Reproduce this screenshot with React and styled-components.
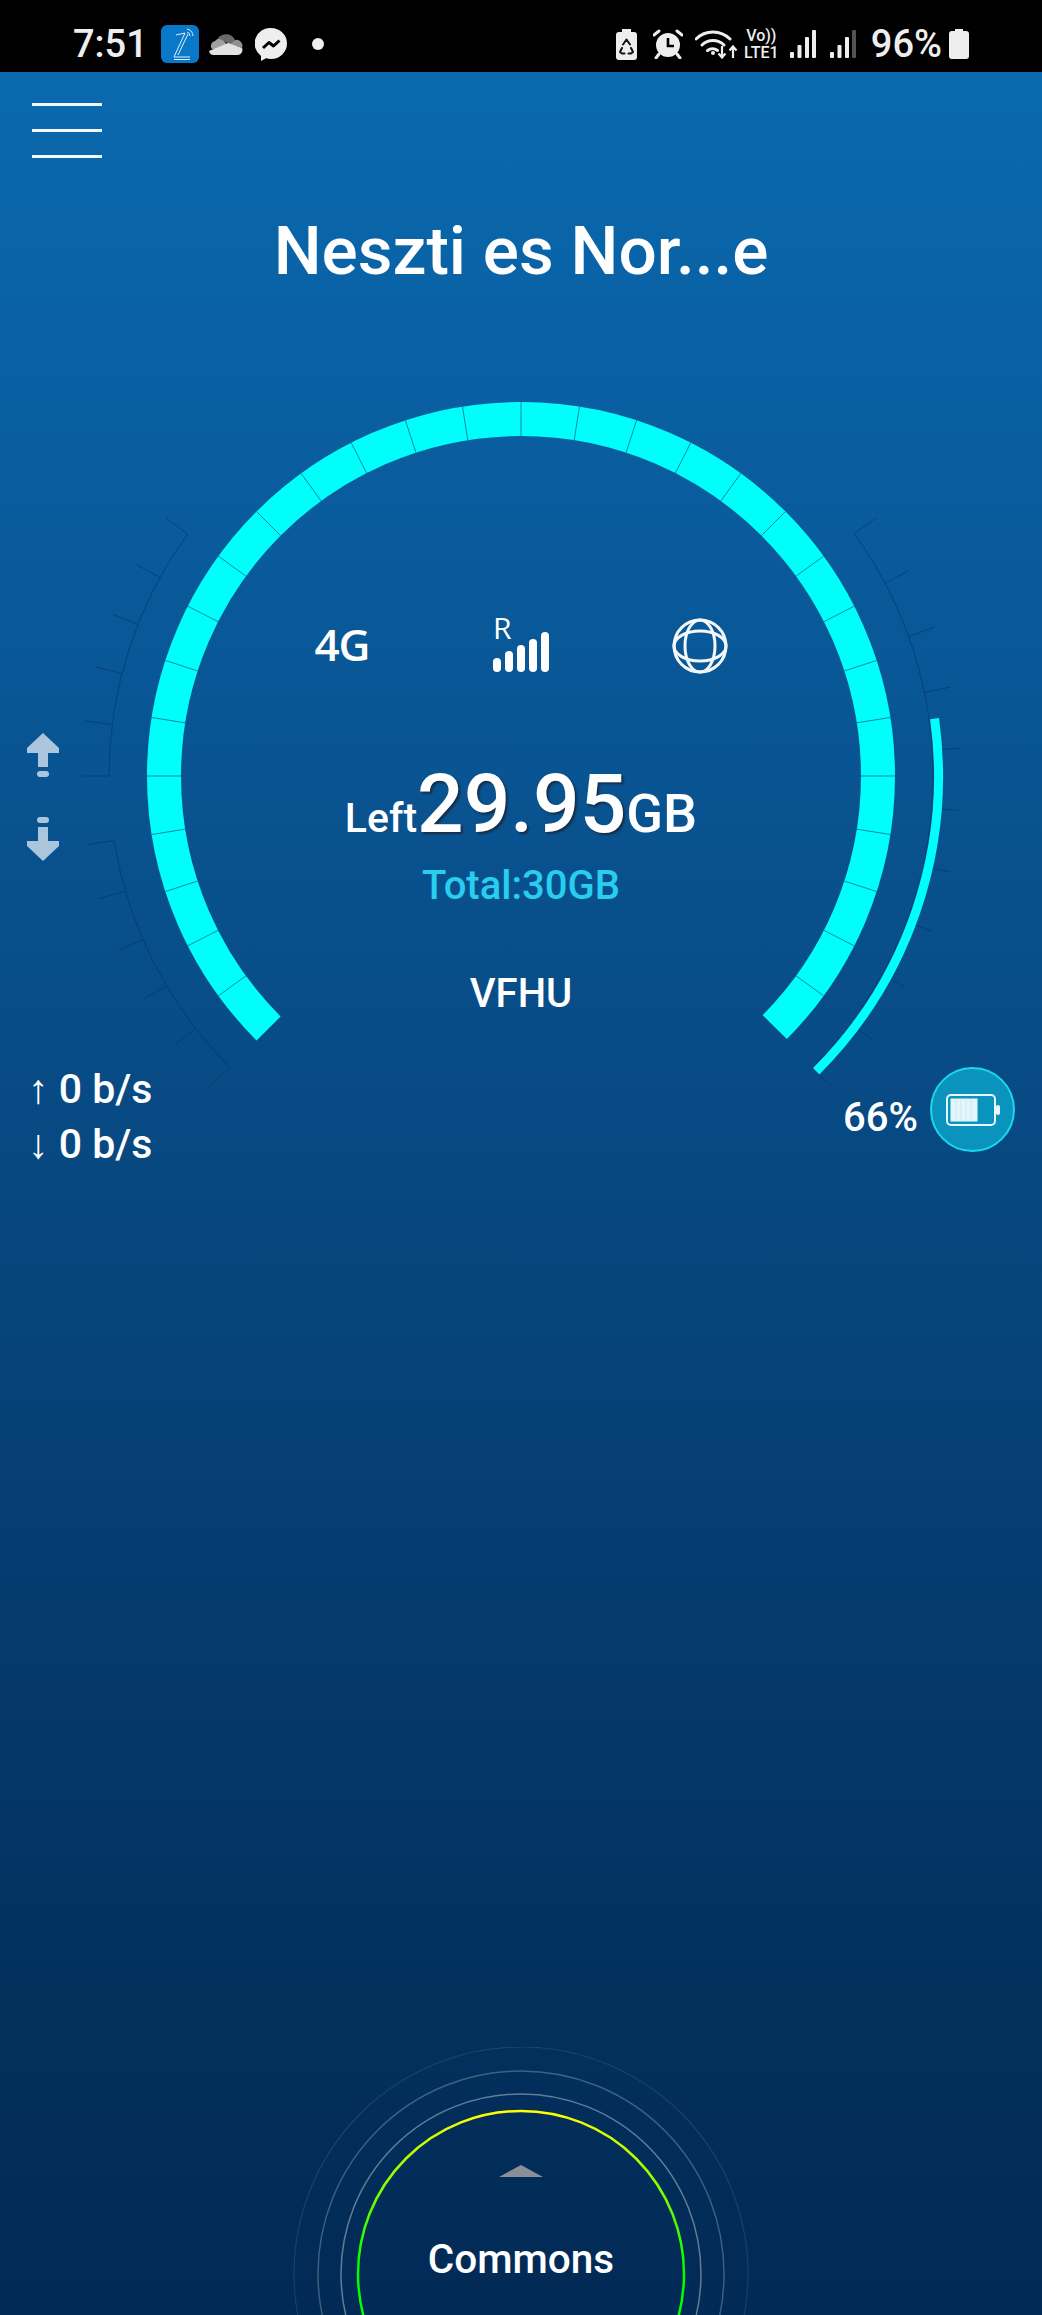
import styled, { createGlobalStyle } from "styled-components";

const GlobalStyle = createGlobalStyle`
  html, body {
    margin: 0;
    padding: 0;
    background: #022a56;
  }
  * {
    box-sizing: border-box;
  }
`;

// gauge centre inside the svg box
const CX = 521;
const CY = 437;

const pt = (r, a) => {
  const rad = (a * Math.PI) / 180;
  return [CX + r * Math.cos(rad), CY - r * Math.sin(rad)];
};

const arc = (r, from, to) => {
  const [x1, y1] = pt(r, from);
  const [x2, y2] = pt(r, to);
  const sweep = to < from ? 1 : 0;
  const large = Math.abs(from - to) > 180 ? 1 : 0;
  return `M${x1} ${y1}A${r} ${r} 0 ${large} ${sweep} ${x2} ${y2}`;
};

const steps = (from, step, count) =>
  Array.from({ length: count + 1 }, (_, i) => from + step * i);

const Radial = ({ a, r1, r2, ...rest }) => {
  const [x1, y1] = pt(r1, a);
  const [x2, y2] = pt(r2, a);
  return <line x1={x1} y1={y1} x2={x2} y2={y2} {...rest} />;
};

const GaugeArt = () => (
  <GaugeSvg viewBox="0 0 1042 820">
    <path d={arc(357, 225, -44.7)} fill="none" stroke="#00fffb" strokeWidth="34" />
    {steps(225, -9, 30)
      .slice(1, 30)
      .map((a) => (
        <Radial key={a} a={a} r1={340} r2={374} stroke="#0a86ad" strokeWidth="1" />
      ))}

    <g fill="none" stroke="#04305f" strokeOpacity="0.55" strokeWidth="1">
      <path d={arc(412, 180, 144)} />
      <path d={arc(412, 189, 225)} />
      <path d={arc(412, 36, -45)} />
      {steps(180, -7.2, 5).map((a) => (
        <Radial key={a} a={a} r1={412} r2={439} />
      ))}
      {steps(189, 7.2, 5).map((a) => (
        <Radial key={a} a={a} r1={412} r2={439} />
      ))}
      {steps(36, -8.1, 10).map((a) => (
        <Radial key={a} a={a} r1={412} r2={439} />
      ))}
    </g>

    <path d={arc(417.5, 7.9, -45)} fill="none" stroke="#00fffb" strokeWidth="9" />
  </GaugeSvg>
);

const TransferArrow = ({ down }) => (
  <ArrowIcon viewBox="0 0 32 44" $down={down}>
    <path d="M16 0 32 15v5H21v14H11V20H0v-5z" fill="#abc5dc" />
    <rect x="10" y="38" width="12" height="6" rx="3" fill="#abc5dc" />
  </ArrowIcon>
);

const SignalBars = ({ dim }) => (
  <StatusIcon viewBox="0 0 26 28" width="26" height="28" $ml={dim ? 14 : 10}>
    <rect x="0" y="22" width="4" height="6" rx="1" fill="#eee" />
    <rect x="7.5" y="15" width="4" height="13" rx="1" fill="#eee" />
    <rect x="15" y="7" width="4" height="21" rx="1" fill="#eee" />
    <rect x="22" y="0" width="4" height="28" rx="1" fill="#eee" opacity={dim ? 0.35 : 1} />
  </StatusIcon>
);

const strengthBars = [14, 21, 27, 33, 40];

export default function App() {
  return (
    <Page>
      <GlobalStyle />
      <StatusBar>
        <StatusGroup>
          <Clock>7:51</Clock>
          <StatusIcon viewBox="0 0 38 38" width="38" height="38" $ml={13}>
            <rect width="38" height="38" rx="6" fill="#0a78c8" />
            <g fill="none" stroke="#dff1ff" strokeWidth="1">
              <path d="M15 10l9-2L13 32h16" />
              <path d="M27 9 17 30M13 34.500h16" />
              <path d="M26 4a7 7 0 0 1 6 7M26 7a4 4 0 0 1 3 4" />
            </g>
          </StatusIcon>
          <StatusIcon viewBox="0 0 35 22" width="35" height="22" $ml={9}>
            <path d="M7 8a8 8 0 0 1 7-3l5 7-6 4H4a5 5 0 0 1 3-8z" fill="#a0a0a0" />
            <path d="M10 5a10 10 0 0 1 17 2l-6 4-5-3z" fill="#6a6a6a" />
            <path d="M27 7a6 6 0 0 1 7 8l-13-4z" fill="#8f8f8f" />
            <path d="M13 13l7-3 14 5a5 5 0 0 1-4 7H6a5 5 0 0 1-5-4z" fill="#e2e2e2" />
          </StatusIcon>
          <StatusIcon viewBox="0 0 32 33" width="32" height="33" $ml={12}>
            <path d="M16 0a16 15.500 0 0 1 0 31 18 18 0 0 1-5-.7L6 33v-5A15.500 15.500 0 0 1 16 0z" fill="#eee" />
            <path d="M8 20l6-5.500 4.500 3.500 6-5.500" fill="none" stroke="#000" strokeWidth="3" strokeLinejoin="round" />
          </StatusIcon>
          <Dot />
        </StatusGroup>

        <StatusGroup>
          <StatusIcon viewBox="0 0 21 31" width="21" height="31">
            <path d="M6 0h9v3h3a3 3 0 0 1 3 3v22a3 3 0 0 1-3 3H3a3 3 0 0 1-3-3V6a3 3 0 0 1 3-3h3z" fill="#eee" />
            <path d="M7 15.500l3.500-5 3.500 5M6 19l-2 4 2 1.500h2.500M15 19l2 4-2 1.500h-2.500" fill="none" stroke="#111" strokeWidth="2" strokeLinecap="round" strokeLinejoin="round" />
          </StatusIcon>
          <StatusIcon viewBox="0 0 30 30" width="30" height="30" $ml={16}>
            <circle cx="15" cy="16" r="12" fill="#eee" />
            <path d="M15 9v8h6" fill="none" stroke="#000" strokeWidth="2.600" />
            <path d="M1 6l5-4M29 6l-5-4M6 25l-3 4M24 25l3 4" stroke="#eee" strokeWidth="3" strokeLinecap="round" />
          </StatusIcon>
          <StatusIcon viewBox="0 0 43 30" width="43" height="30" $ml={12}>
            <g fill="none" stroke="#eee" strokeWidth="3" strokeLinecap="round">
              <path d="M1 10a24 24 0 0 1 34 0" />
              <path d="M7 16a16 16 0 0 1 22 0" />
              <path d="M12.500 21.500a8 8 0 0 1 10 0" />
            </g>
            <circle cx="18" cy="24" r="2" fill="#eee" />
            <path d="M27 17v11M23.500 24.500l3.500 4 3.500-4M38 29V18M34.500 21.500l3.500-4 3.500 4" fill="none" stroke="#eee" strokeWidth="2.200" />
          </StatusIcon>
          <Network>
            <span>Vo))</span>
            <span>LTE1</span>
          </Network>
          <SignalBars />
          <SignalBars dim />
          <BatteryText>96%</BatteryText>
          <StatusIcon viewBox="0 0 20 30" width="20" height="30" $ml={7}>
            <path d="M6 0h8v2h3a3 3 0 0 1 3 3v22a3 3 0 0 1-3 3H3a3 3 0 0 1-3-3V5a3 3 0 0 1 3-3h3z" fill="#eee" />
          </StatusIcon>
        </StatusGroup>
      </StatusBar>

      <Menu>
        <MenuLine />
        <MenuLine />
        <MenuLine />
      </Menu>

      <Title>Neszti es Nor...e</Title>

      <Gauge>
        <GaugeArt />
        <GaugeGrid>
          <Arrows>
            <TransferArrow />
            <TransferArrow down />
          </Arrows>

          <Readout>
            <IconRow>
              <NetType>4G</NetType>
              <Strength>
                <RoamLetter>R</RoamLetter>
                <svg viewBox="0 0 56 40" width="56" height="40">
                  {strengthBars.map((h, i) => (
                    <rect key={h} x={i * 12} y={40 - h} width="8" height={h} rx="4" fill="#fff" />
                  ))}
                </svg>
              </Strength>
              <svg viewBox="0 0 58 58" width="58" height="58">
                <g fill="none" stroke="#f4f8fb" strokeWidth="3">
                  <circle cx="29" cy="29" r="26" />
                  <ellipse cx="29" cy="29" rx="15" ry="26" />
                  <ellipse cx="29" cy="29" rx="26" ry="15" />
                </g>
              </svg>
            </IconRow>

            <ValueRow>
              <Small>Left</Small>
              <Amount>29.95</Amount>
              <Unit>GB</Unit>
            </ValueRow>
            <Total>Total:30GB</Total>
            <Carrier>VFHU</Carrier>
          </Readout>
        </GaugeGrid>

        <GaugeFooter>
          <Speeds>
            <Speed>
              <SpeedArrow>↑</SpeedArrow> 0 b/s
            </Speed>
            <Speed>
              <SpeedArrow>↓</SpeedArrow> 0 b/s
            </Speed>
          </Speeds>
          <BatteryInfo>
            <BatteryPercent>66%</BatteryPercent>
            <BatteryBadge>
              <svg viewBox="0 0 54 32" width="54" height="32">
                <rect x="1" y="1" width="48" height="30" rx="4" fill="none" stroke="#e8f7fb" strokeWidth="2" />
                <rect x="4.500" y="4.500" width="27" height="23" fill="#e4f6fa" />
                <path d="M10 5v22M15 5v22M20 5v22M25 5v22" stroke="#c8ecf3" strokeWidth="1" />
                <rect x="50" y="11" width="4" height="10" rx="2" fill="#e8f7fb" />
              </svg>
            </BatteryBadge>
          </BatteryInfo>
        </GaugeFooter>
      </Gauge>

      <Dial>
        <DialRings viewBox="0 0 1042 268">
          <defs>
            <linearGradient id="ringGrad" x1="0" y1="64" x2="0" y2="220" gradientUnits="userSpaceOnUse">
              <stop offset="0" stopColor="#ffff00" />
              <stop offset="1" stopColor="#00ff00" />
            </linearGradient>
          </defs>
          <circle cx="521" cy="227" r="227" fill="none" stroke="#fff" strokeOpacity="0.1" strokeWidth="1.200" />
          <circle cx="521" cy="227" r="203" fill="none" stroke="#fff" strokeOpacity="0.24" strokeWidth="1.500" />
          <circle cx="521" cy="227" r="180" fill="none" stroke="#fff" strokeOpacity="0.38" strokeWidth="1.500" />
          <circle cx="521" cy="227" r="163" fill="none" stroke="url(#ringGrad)" strokeWidth="2.500" />
        </DialRings>
        <Caret />
        <DialLabel>Commons</DialLabel>
      </Dial>
    </Page>
  );
}

const Page = styled.div`
  position: relative;
  width: 1042px;
  height: 2315px;
  overflow: hidden;
  display: flex;
  flex-direction: column;
  font-family: Roboto, "Liberation Sans", sans-serif;
  color: #fff;
  background: linear-gradient(180deg, #0a69af 72px, #084d88 1000px, #03305d 2000px, #022a56 100%);
`;

const StatusBar = styled.div`
  height: 72px;
  flex: none;
  padding: 16px 73px 0;
  display: flex;
  align-items: center;
  justify-content: space-between;
  background: #000;
  color: #eee;
`;

const StatusGroup = styled.div`
  display: flex;
  align-items: center;
`;

const StatusIcon = styled.svg`
  display: block;
  flex: none;
  margin-left: ${(p) => p.$ml || 0}px;
`;

const Clock = styled.span`
  font-size: 38px;
  font-weight: 500;
  line-height: 44px;
`;

const Dot = styled.span`
  width: 12px;
  height: 12px;
  margin-left: 25px;
  border-radius: 50%;
  background: #eee;
`;

const Network = styled.div`
  margin-left: 5px;
  width: 37px;
  display: flex;
  flex-direction: column;
  gap: 1px;
  font-size: 16px;
  font-weight: 500;
  line-height: 16px;
  text-align: center;
  white-space: nowrap;
`;

const BatteryText = styled.span`
  margin-left: 15px;
  font-size: 38px;
  font-weight: 500;
  line-height: 44px;
`;

const Menu = styled.div`
  width: 70px;
  margin: 31px 0 0 32px;
  display: flex;
  flex-direction: column;
  gap: 23px;
`;

const MenuLine = styled.span`
  height: 3px;
  background: #f2f7fb;
`;

const Title = styled.h1`
  margin: 56px 0 0;
  font-size: 67.5px;
  font-weight: 500;
  line-height: 74px;
  text-align: center;
`;

const Gauge = styled.div`
  position: relative;
  height: 820px;
  margin-top: 51px;
  flex: none;
`;

const GaugeSvg = styled.svg`
  position: absolute;
  inset: 0;
  width: 1042px;
  height: 820px;
`;

const GaugeGrid = styled.div`
  position: relative;
  display: grid;
  grid-template-columns: 1fr auto 1fr;
`;

const Arrows = styled.div`
  padding: 394px 0 0 27px;
  display: flex;
  flex-direction: column;
  gap: 40px;
`;

const ArrowIcon = styled.svg`
  display: block;
  width: 32px;
  height: 44px;
  filter: blur(0.5px);
  transform: ${(p) => (p.$down ? "scaleY(-1)" : "none")};
`;

const Readout = styled.div`
  padding-top: 278px;
  display: flex;
  flex-direction: column;
  align-items: center;
`;

const IconRow = styled.div`
  width: 537px;
  height: 58px;
  display: grid;
  grid-template-columns: repeat(3, 179px);
  justify-items: center;
  align-items: center;
`;

const NetType = styled.span`
  font-family: "Open Sans", sans-serif;
  font-size: 44px;
  font-weight: 600;
  line-height: 58px;
  letter-spacing: -1px;
  margin-top: -4px;
`;

const Strength = styled.div`
  position: relative;
  width: 56px;
  height: 52px;
  display: flex;
  align-items: flex-end;
`;

const RoamLetter = styled.span`
  position: absolute;
  left: 0;
  top: -7px;
  font-family: "Open Sans", sans-serif;
  font-size: 30px;
  line-height: 30px;
`;

const ValueRow = styled.div`
  margin-top: 84px;
  display: flex;
  align-items: baseline;
  justify-content: center;
`;

const Small = styled.span`
  font-size: 41px;
  font-weight: 500;
  line-height: 90px;
`;

const Amount = styled.span`
  font-size: 82px;
  font-weight: 500;
  line-height: 90px;
  text-shadow: 2px 2px 2px rgba(30, 30, 40, 0.7);
`;

const Unit = styled.span`
  font-size: 54px;
  font-weight: 500;
  line-height: 90px;
`;

const Total = styled.div`
  margin-top: -1px;
  font-size: 40px;
  font-weight: 500;
  line-height: 47px;
  color: #29cdf0;
`;

const Carrier = styled.div`
  margin-top: 61px;
  font-size: 40px;
  font-weight: 500;
  line-height: 47px;
`;

const GaugeFooter = styled.div`
  position: relative;
  margin-top: 45px;
  padding: 0 27px 0 28px;
  display: flex;
  align-items: flex-start;
  justify-content: space-between;
`;

const Speeds = styled.div`
  display: flex;
  flex-direction: column;
`;

const Speed = styled.div`
  font-size: 41px;
  font-weight: 500;
  line-height: 55px;
`;

const SpeedArrow = styled.span`
  font-weight: 400;
`;

const BatteryInfo = styled.div`
  display: flex;
  align-items: center;
  gap: 12px;
  margin-top: 5px;
`;

const BatteryPercent = styled.span`
  font-size: 40px;
  font-weight: 500;
  line-height: 47px;
  margin-top: 16px;
`;

const BatteryBadge = styled.div`
  width: 85px;
  height: 85px;
  border: 2px solid #19d7ec;
  border-radius: 50%;
  background: #0a94bd;
  display: flex;
  align-items: center;
  justify-content: center;
`;

const Dial = styled.div`
  position: absolute;
  left: 0;
  right: 0;
  bottom: 0;
  height: 268px;
  display: flex;
  flex-direction: column;
  align-items: center;
`;

const DialRings = styled.svg`
  position: absolute;
  inset: 0;
  width: 1042px;
  height: 268px;
`;

const Caret = styled.div`
  position: relative;
  margin-top: 118px;
  width: 44px;
  height: 12px;
  background: #8b9096;
  clip-path: polygon(50% 0, 100% 100%, 0 100%);
`;

const DialLabel = styled.div`
  position: relative;
  margin-top: 59px;
  font-size: 40.5px;
  font-weight: 500;
  line-height: 47px;
`;
